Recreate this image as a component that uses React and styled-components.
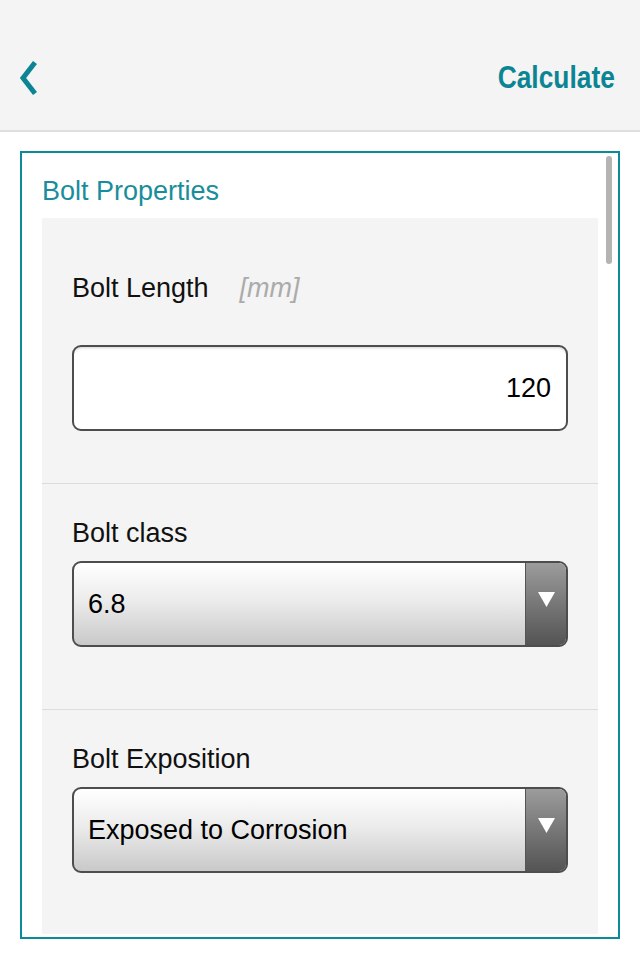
import React from "react";
import styled, { createGlobalStyle } from "styled-components";

const Global = createGlobalStyle`
  html, body { margin: 0; padding: 0; background: #ffffff; }
  body { font-family: "Liberation Sans", Arial, Helvetica, sans-serif; color: #000; }
  * { box-sizing: border-box; }
`;

const Page = styled.div`
  width: 640px;
  height: 960px;
  overflow: hidden;
  background: #fff;
`;

const Header = styled.header`
  height: 132px;
  background: #f4f4f4;
  border-bottom: 2px solid #dedede;
  display: flex;
  align-items: center;
  justify-content: space-between;
  padding: 26px 25px 0 16px;
`;

const BackButton = styled.button`
  border: 0;
  background: none;
  padding: 0;
  width: 22px;
  height: 34px;
  display: flex;
  align-items: center;
  cursor: pointer;
`;

const CalcButton = styled.button`
  border: 0;
  background: none;
  padding: 0;
  font-family: "Liberation Sans", Arial, sans-serif;
  font-weight: 700;
  font-size: 31px;
  line-height: 34px;
  color: #0b8594;
  transform: scaleX(0.85);
  transform-origin: right center;
  cursor: pointer;
`;

const Panel = styled.section`
  position: relative;
  margin: 19px 20px 0 20px;
  border: 2px solid #0b8a99;
  padding: 22px 20px 3px 20px;
`;

const PanelTitle = styled.h2`
  margin: 0 0 11px 0;
  font-weight: 400;
  font-size: 27px;
  line-height: 32px;
  color: #1a8d9c;
`;

const ScrollThumb = styled.div`
  position: absolute;
  top: 3px;
  right: 6px;
  width: 6px;
  height: 108px;
  border-radius: 3px;
  background: #b4b4b4;
`;

const Fields = styled.div`
  background: #f4f4f4;
  display: flex;
  flex-direction: column;
`;

const Field = styled.div`
  padding: ${(p) => p.$top}px 30px ${(p) => p.$bottom}px 30px;
  display: flex;
  flex-direction: column;
  gap: ${(p) => p.$gap}px;
  & + & {
    border-top: 1px solid #dcdcdc;
  }
`;

const LabelRow = styled.div`
  display: flex;
  align-items: baseline;
  gap: 31px;
  font-size: 27px;
  line-height: 32px;
`;

const Label = styled.label`
  color: #111;
`;

const Unit = styled.span`
  font-style: italic;
  color: #ababab;
`;

const TextBox = styled.div`
  height: 86px;
  border: 2px solid #4d4d4d;
  border-radius: 9px;
  background: #fff;
  box-shadow: inset 0 3px 3px -2px rgba(0, 0, 0, 0.18);
  display: flex;
  align-items: center;
  justify-content: flex-end;
  padding: 0 15px;
  font-size: 27px;
  color: #000;
`;

const Select = styled.div`
  height: 86px;
  border: 2px solid #4d4d4d;
  border-radius: 9px;
  overflow: hidden;
  display: flex;
  background: linear-gradient(to bottom, #ffffff 0%, #ececec 45%, #c9c9c9 100%);
`;

const SelectValue = styled.div`
  flex: 1;
  display: flex;
  align-items: center;
  padding: 0 14px;
  font-size: 27px;
  color: #000;
`;

const SelectArrow = styled.div`
  width: 41px;
  border-left: 1px solid #555;
  background: linear-gradient(to bottom, #9c9c9c 0%, #777 50%, #545454 100%);
  display: flex;
  justify-content: center;
  padding-top: 29px;
`;

const Chevron = () => (
  <svg width="22" height="34" viewBox="0 0 22 34">
    <polyline
      points="19,1.5 7,17 19,32.5"
      fill="none"
      stroke="#0b8594"
      strokeWidth="5"
      strokeLinejoin="miter"
    />
  </svg>
);

const Triangle = () => (
  <svg width="17" height="15" viewBox="0 0 17 15">
    <polygon points="0,0 17,0 8.5,15" fill="#fff" />
  </svg>
);

export default function App() {
  return (
    <Page>
      <Global />
      <Header>
        <BackButton aria-label="Back">
          <Chevron />
        </BackButton>
        <CalcButton>Calculate</CalcButton>
      </Header>
      <Panel>
        <ScrollThumb />
        <PanelTitle>Bolt Properties</PanelTitle>
        <Fields>
          <Field $top={54} $bottom={52} $gap={41}>
            <LabelRow>
              <Label>Bolt Length</Label>
              <Unit>[mm]</Unit>
            </LabelRow>
            <TextBox>120</TextBox>
          </Field>
          <Field $top={33} $bottom={62} $gap={12}>
            <LabelRow>
              <Label>Bolt class</Label>
            </LabelRow>
            <Select>
              <SelectValue>6.8</SelectValue>
              <SelectArrow>
                <Triangle />
              </SelectArrow>
            </Select>
          </Field>
          <Field $top={33} $bottom={61} $gap={12}>
            <LabelRow>
              <Label>Bolt Exposition</Label>
            </LabelRow>
            <Select>
              <SelectValue>Exposed to Corrosion</SelectValue>
              <SelectArrow>
                <Triangle />
              </SelectArrow>
            </Select>
          </Field>
        </Fields>
      </Panel>
    </Page>
  );
}
